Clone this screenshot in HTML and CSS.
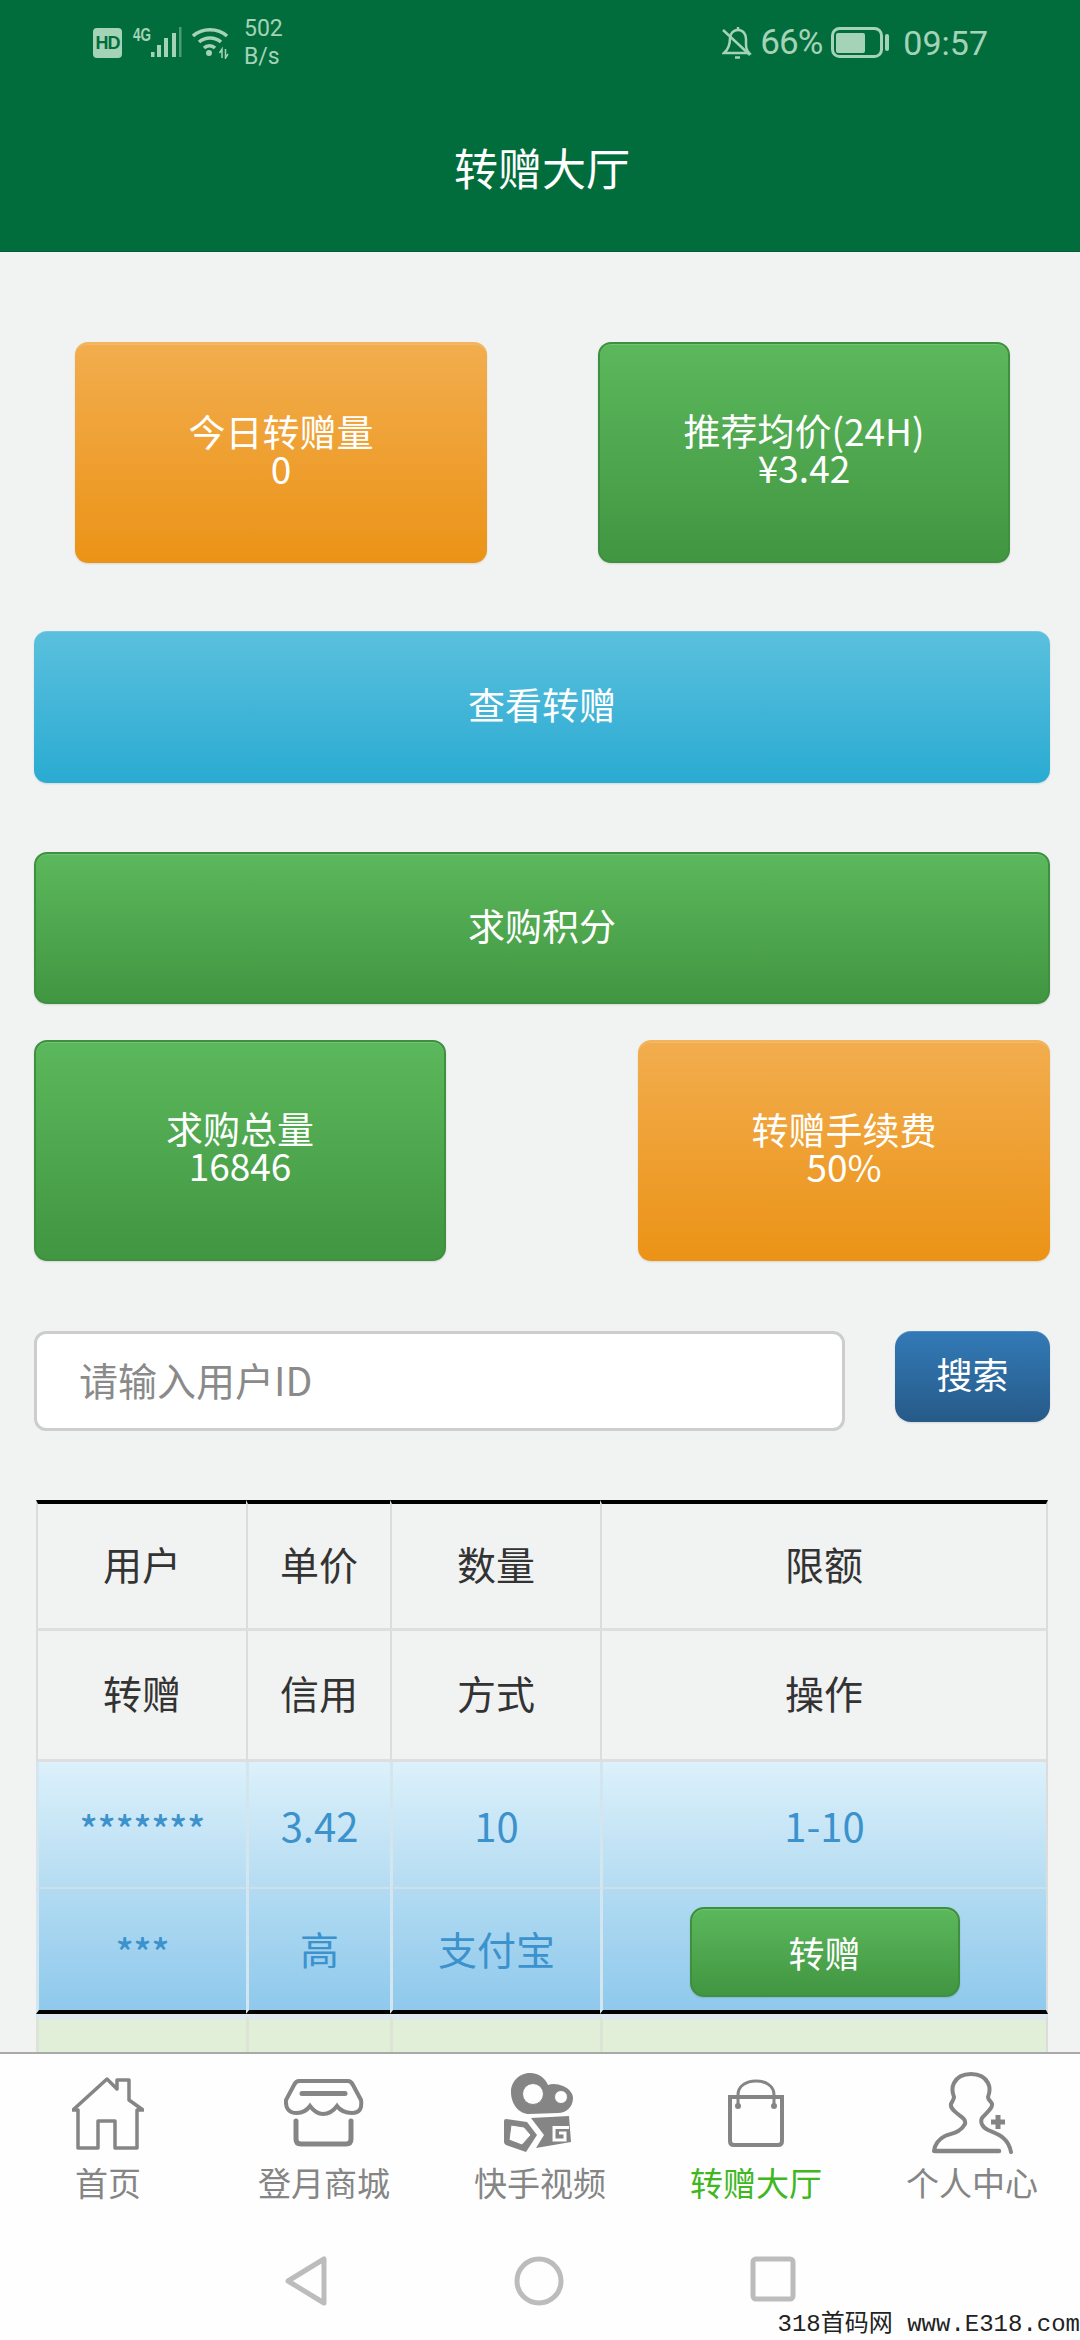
FILE: index.html
```html
<!DOCTYPE html>
<html lang="zh-CN">
<head>
  <meta charset="UTF-8" />
  <meta name="viewport" content="width=device-width, initial-scale=1" />
  <title>转赠大厅</title>
  <link rel="stylesheet" href="styles.css">
</head>
<body>
  <div class="app">
    <header class="top-bar">
      <div class="status-bar">
        <div class="status-left">
          <span class="hd-badge">HD</span>
          <svg class="signal" width="50" height="36" viewBox="132 23 50 36">
            <text x="133" y="41" textLength="18" lengthAdjust="spacingAndGlyphs" class="signal-label">4G</text>
            <rect x="151" y="52" width="3.5" height="5" />
            <rect x="157" y="45" width="4" height="12" />
            <rect x="164" y="38" width="4" height="19" />
            <rect x="172" y="33" width="4" height="24" />
            <rect x="179" y="27" width="2.5" height="30" opacity="0.45" />
          </svg>
          <svg class="wifi" width="37" height="32" viewBox="192 27 37 32">
            <path d="M193 36 C202 27.5 218 27.5 227 36" />
            <path d="M199 42 C205 36.5 215 36.5 221 42" />
            <path d="M204 48 C207 45 212 45 215 48" />
            <circle cx="209" cy="53" r="3" class="wifi-dot" />
            <path d="M222 58 V49 L219.5 53 M225.5 49 V58 L228 54" class="wifi-arrows" />
          </svg>
          <div class="net-speed"><span>502</span><span>B/s</span></div>
        </div>
        <div class="status-right">
          <svg class="bell" width="30" height="34" viewBox="725 25 30 34">
            <path d="M727 52 C732 48 733 43 733 37 C733 32 737 29 741 29 C746 29 749 33 749 38 V43 C749 47 750 50 752 52 Z" />
            <path d="M726 29 L753 54 M741 29 V26 M738 56.5 H743" />
          </svg>
          <span class="battery-pct">66%</span>
          <svg class="battery" width="60" height="32" viewBox="831 27 60 32">
            <rect x="833.5" y="28.5" width="49" height="28" rx="7" fill="none" stroke-width="3" />
            <rect x="837" y="33" width="29" height="20" rx="2" class="battery-fill" />
            <rect x="886" y="34" width="4" height="17" rx="2" class="battery-fill" />
          </svg>
          <span class="clock">09:57</span>
        </div>
      </div>
      <h1 class="page-title">转赠大厅</h1>
    </header>

    <main class="content">
      <div class="card-row card-row-top">
        <div class="btn btn-orange stat-card">今日转赠量<br>0</div>
        <div class="btn btn-green stat-card">推荐均价(24H)<br>¥3.42</div>
      </div>

      <button class="btn btn-blue wide-btn btn-view">查看转赠</button>
      <button class="btn btn-green wide-btn btn-buy">求购积分</button>

      <div class="card-row card-row-bottom">
        <div class="btn btn-green stat-card">求购总量<br>16846</div>
        <div class="btn btn-orange stat-card">转赠手续费<br>50%</div>
      </div>

      <form class="search-row">
        <input class="search-input" type="text" placeholder="请输入用户ID">
        <button class="btn search-btn" type="button">搜索</button>
      </form>

      <table class="trade-table">
        <colgroup>
          <col class="col-user"><col class="col-price"><col class="col-qty"><col class="col-limit">
        </colgroup>
        <thead>
          <tr><th>用户</th><th>单价</th><th>数量</th><th>限额</th></tr>
          <tr><th>转赠</th><th>信用</th><th>方式</th><th>操作</th></tr>
        </thead>
        <tbody>
          <tr class="row-info-top">
            <td><span class="stars">*******</span></td><td>3.42</td><td>10</td><td>1-10</td>
          </tr>
          <tr class="row-info-bottom">
            <td><span class="stars">***</span></td><td>高</td><td>支付宝</td>
            <td><button class="btn btn-green give-btn">转赠</button></td>
          </tr>
          <tr class="row-success">
            <td></td><td></td><td></td><td></td>
          </tr>
        </tbody>
      </table>
    </main>

    <nav class="tab-bar" aria-label="Main Navigation">
      <a class="tab" href="#">
        <svg class="tab-icon" width="72" height="72" viewBox="0 0 72 72" fill="none">
          <path d="M6 71 V33 H1 L35 2 L45 12 V3 H57 V23 L71 33 H65 V71 H43 V44 H26 V71 Z" stroke-width="3.5" stroke-linejoin="round" />
        </svg>
        <span>首页</span>
      </a>
      <a class="tab" href="#">
        <svg class="tab-icon" width="80" height="72" viewBox="14 18 80 72" fill="none">
          <path d="M29 22 H78 Q81 22 83 26 L91 41 Q93 54 82 54 Q72 54 67 47 Q61 55 53 55 Q46 55 40 47 Q35 54 27 54 Q15 54 16 41 L24 26 Q26 22 29 22 Z" stroke-width="4" />
          <path d="M32 34.5 H75" stroke-width="5" stroke-linecap="round" />
          <path d="M26 62 V80 Q26 85 31 85 H76 Q81 85 81 80 V62" stroke-width="5" stroke-linecap="round" />
        </svg>
        <span>登月商城</span>
      </a>
      <a class="tab" href="#">
        <svg class="tab-icon" width="72" height="82" viewBox="25 12 72 82">
          <path class="fill-icon" d="M32 32 C32 20 42 13 51 13 C60 13 66 18 69 25 C74 23 79 24 84 26 C91 29 94 34 94 38 C94 47 87 53 79 53 L50 54 C40 54 32 44 32 32 Z" />
          <circle cx="54" cy="34" r="10.5" fill="#fefefe" />
          <circle cx="82" cy="37" r="6.5" fill="#fefefe" />
          <path class="fill-icon" d="M27 59 L48 62 L58 75 L47 92 L27 85 Q25 84 25 82 V61 Q25 59 27 59 Z" />
          <path d="M32 65 L45 67 L52 75 L43 85 L30 80 Z" fill="#fefefe" />
          <path class="fill-icon" d="M52 58 L90 56 L92 82 L57 88 L65 75 Z" />
          <path d="M90 67.5 H75 V80 H86 V73 H80" fill="none" stroke="#fefefe" stroke-width="3" />
        </svg>
        <span>快手视频</span>
      </a>
      <a class="tab tab-active" href="#">
        <svg class="tab-icon" width="58" height="72" viewBox="0 0 58 72" fill="none">
          <path d="M3 20 H55 V64 Q55 68 51 68 H7 Q3 68 3 64 Z" stroke-width="4" />
          <path d="M11 28 V18 C11 9 19 4 29 4 C39 4 47 9 47 18 V28" stroke-width="3" />
          <circle cx="11" cy="29" r="3" class="fill-icon" />
          <circle cx="47" cy="29" r="3" class="fill-icon" />
        </svg>
        <span>转赠大厅</span>
      </a>
      <a class="tab" href="#">
        <svg class="tab-icon" width="82" height="82" viewBox="15 13 82 82" fill="none">
          <path d="M18 92 C19 84 23 80 29 77 C36 74 44 74 49 65 C50 61 47 59 43 56 C38 52 34 49 35 45 C36 42 38 41 38 38 C36 33 36 28 38 24 C41 18 47 15 55 15 C63 15 69 18 72 24 C74 28 74 33 72 38 C72 41 75 42 76 45 C77 49 70 54 66 59 C64 63 66 68 72 71 C80 75 92 77 95 93" stroke-width="4" stroke-linecap="round" />
          <path d="M19 92 H83" stroke-width="4.5" stroke-linecap="round" />
          <path d="M82 56 V70 M75 63 H89" stroke-width="5" />
        </svg>
        <span>个人中心</span>
      </a>
    </nav>

    <div class="system-nav">
      <svg width="44" height="50" viewBox="0 0 44 50" fill="none">
        <path d="M40 3 V47 L4 25 Z" stroke-width="5" stroke-linejoin="round" />
      </svg>
      <svg width="50" height="50" viewBox="0 0 50 50" fill="none">
        <circle cx="25" cy="25" r="22" stroke-width="5" />
      </svg>
      <svg width="46" height="46" viewBox="0 0 46 46" fill="none">
        <rect x="3" y="3" width="40" height="40" rx="3" stroke-width="5" />
      </svg>
    </div>

    <div class="watermark">318首码网 www.E318.com</div>
  </div>
</body>
</html>
```

FILE: styles.css
```css
* {
  box-sizing: border-box;
}
body {
  margin: 0;
  padding: 0;
  font-family: "Noto Sans CJK SC", "Noto Sans", sans-serif;
  background: #f1f2f2;
}
.app {
  position: relative;
  width: 1080px;
  height: 2340px;
  display: flex;
  flex-direction: column;
  overflow: hidden;
}

/* Header + status bar */
.top-bar {
  flex: none;
  height: 252px;
  background: #026d3c;
  color: #fff;
  border-bottom: 1px solid #025f35;
}
.status-bar {
  height: 84px;
  padding: 20px 92px 0 93px;
  display: flex;
  justify-content: space-between;
  align-items: flex-start;
  color: #a4d3b7;
}
.status-left, .status-right {
  display: flex;
  align-items: center;
  height: 46px;
}
.status-bar svg {
  stroke: #a4d3b7;
  fill: #a4d3b7;
}
.hd-badge {
  width: 29px;
  height: 30px;
  background: #a4d3b7;
  color: #026d3c;
  border-radius: 4px;
  font: 700 18px/30px "Liberation Sans", sans-serif;
  text-align: center;
  letter-spacing: -1px;
}
.signal {
  margin: -4px 0 0 10px;
}
.signal rect {
  stroke: none;
}
.signal-label {
  font: 700 19px "Liberation Sans", sans-serif;
  stroke: none;
}
.wifi {
  margin-left: 10px;
}
.wifi path {
  fill: none;
  stroke-width: 3.5;
}
.wifi .wifi-dot {
  stroke: none;
}
.wifi .wifi-arrows {
  stroke-width: 1.5;
}
.net-speed {
  margin-left: 15px;
  display: flex;
  flex-direction: column;
  font: 23px/28px Roboto, sans-serif;
  width: 40px;
}
.status-bar .bell {
  fill: none;
  stroke-width: 2.5;
}
.battery-pct {
  margin-left: 8px;
  font: 35px/46px Roboto, sans-serif;
  letter-spacing: -1px;
}
.battery {
  margin-left: 8px;
}
.battery .battery-fill {
  stroke: none;
}
.clock {
  margin-left: 13px;
  font: 34px/46px Roboto, sans-serif;
}
.page-title {
  margin: 0;
  padding: 53px 0 0 4px;
  font-size: 44px;
  font-weight: 400;
  line-height: 60px;
  text-align: center;
}

/* Buttons and cards */
.content {
  flex: 1;
  min-height: 0;
  overflow: hidden;
}
.btn {
  display: flex;
  align-items: center;
  justify-content: center;
  padding: 0 0 7px;
  border-radius: 13px;
  border: none;
  color: #fff;
  font-family: inherit;
  font-size: 37px;
  text-align: center;
  box-shadow: inset 0 1px 0 rgba(255,255,255,0.15), 0 1px 2px rgba(0,0,0,0.12);
}
.btn-orange {
  background: linear-gradient(to bottom, #f2ad4e, #eb9316);
  border-top: 2px solid #f3b45c;
}
.btn-green {
  background: linear-gradient(to bottom, #5cb85c, #419641);
  border: 2px solid #3e8f3e;
}
.btn-blue {
  background: linear-gradient(to bottom, #5bc0de, #2aabd2);
}
.card-row {
  display: flex;
  justify-content: space-between;
}
.card-row-top {
  margin: 90px 70px 0 75px;
}
.card-row-bottom {
  margin: 36px 30px 0 34px;
}
.stat-card {
  width: 412px;
  height: 221px;
  line-height: 37px;
}
.wide-btn {
  width: 1016px;
  height: 152px;
  margin-left: 34px;
}
.btn-view {
  margin-top: 68px;
}
.btn-buy {
  margin-top: 69px;
}

/* Search */
.search-row {
  display: flex;
  align-items: flex-start;
  justify-content: space-between;
  margin: 70px 30px 0 34px;
}
.search-input {
  width: 811px;
  height: 100px;
  padding: 0 42px 5px;
  border: 3px solid #cdcdcd;
  border-radius: 12px;
  background: #fff;
  font-family: inherit;
  font-size: 39px;
  color: #333;
  outline: none;
}
.search-input::placeholder {
  color: #8a8a8a;
}
.search-btn {
  width: 155px;
  height: 91px;
  border-radius: 16px;
  background: linear-gradient(to bottom, #337ab7, #265a88);
  font-size: 36px;
}

/* Table */
.trade-table {
  width: 1012px;
  margin: 69px 0 0 36px;
  border-collapse: separate;
  border-spacing: 0;
  table-layout: fixed;
  font-size: 39px;
  text-align: center;
}
.col-user { width: 210px; }
.col-price { width: 144px; }
.col-qty { width: 210px; }
.col-limit { width: 448px; }
.trade-table th {
  height: 131px;
  padding: 0 0 6px;
  font-weight: 400;
  color: #333;
  border-left: 2px solid #dcdcdc;
  border-bottom: 3px solid #dedede;
}
.trade-table th:last-child, .trade-table td:last-child {
  border-right: 2px solid #dcdcdc;
}
.trade-table thead tr:first-child th {
  border-top: 4px solid #000;
}
.trade-table td {
  border-left: 3px solid #d3e6ef;
  color: #3b92cc;
  padding: 0;
}
.stars {
  display: block;
  font-size: 37px;
  line-height: 32px;
  font-weight: 500;
  margin-top: 6px;
}
.row-info-top td {
  height: 127px;
  background: linear-gradient(to bottom, #dcf1fb, #b5dcf2);
  border-bottom: 2px solid #cfdfe8;
  font-size: 40px;
}
.row-info-bottom td {
  height: 125px;
  padding-bottom: 3px;
  background: linear-gradient(to bottom, #b2dbf2, #8fc9ec);
  border-bottom: 4px solid #000;
}
.row-success td {
  height: 120px;
  background: #e2efd8;
  border-left-color: #dbe4d6;
  border-top: 6px solid #dbe8ef;
}
.give-btn {
  width: 270px;
  height: 90px;
  margin: 7px auto 0;
  padding: 0;
  font-size: 36px;
  border-radius: 14px;
}

/* Bottom tabs */
.tab-bar {
  flex: none;
  height: 164px;
  display: flex;
  background: #fefefe;
  border-top: 2px solid #a9a9a9;
}
.tab {
  flex: 1;
  display: flex;
  flex-direction: column;
  align-items: center;
  color: #858585;
  text-decoration: none;
  font-size: 33px;
  line-height: 44px;
}
.tab-icon {
  height: 82px;
  margin-top: 18px;
  margin-bottom: 6px;
  stroke: #858585;
}
.tab-icon .fill-icon {
  fill: #858585;
  stroke: none;
}
.tab-active {
  color: #3fb71f;
}
.system-nav {
  flex: none;
  height: 124px;
  padding-top: 40px;
  display: flex;
  justify-content: center;
  align-items: flex-start;
  gap: 186px;
  background: #fefefe;
}
.system-nav svg {
  stroke: #bcbcbc;
}
.watermark {
  position: absolute;
  right: 0;
  bottom: 2px;
  font: 24px/26px "Liberation Mono", "Noto Sans CJK SC", monospace;
  color: #222;
  white-space: nowrap;
}
```
